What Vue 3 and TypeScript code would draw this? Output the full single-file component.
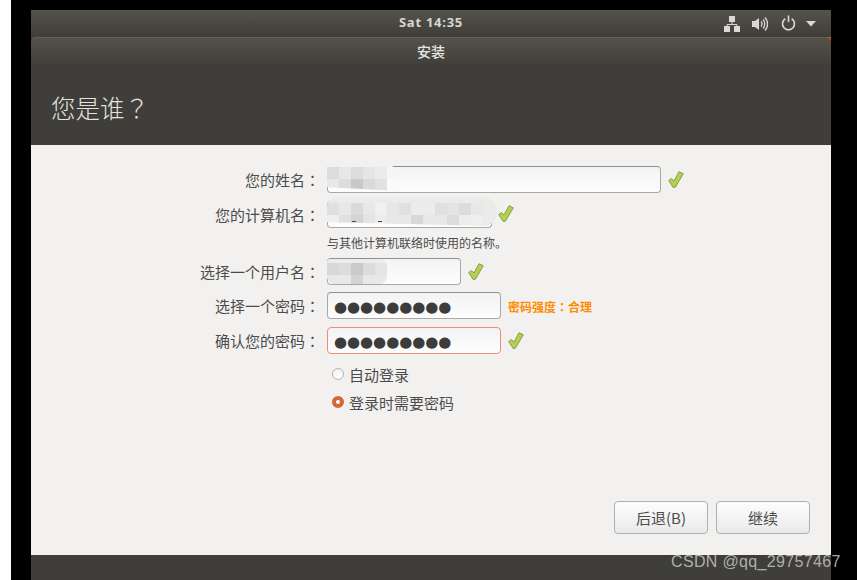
<script setup lang="ts">
const nameCells: string[][] = [
  ['#dcdcdc', '#e6e7e8', '#dcdcdc', '#e4e5e7', '#ebebeb', '#f6f6f6'],
  ['#e8e8e8', '#dcdcdc', '#c8c8c8', '#dadada', '#e2e2e2', '#fafafa']
]
const hostCells: string[][] = [
  ['#e0e0e0', '#e8e8e8', '#dadada', '#e8e8e8', '#f0f0f0', '#e6e6e6', '#e0e0e0', '#ececec', '#ececec', '#e0e0e0', '#e4e4e4', '#dcdcdc', '#e8e8e8', '#ebebe9'],
  ['#eeeeee', '#e0e0e0', '#d4d4d4', '#e4e4e4', '#ececec', '#e8e8e8', '#e8e8e8', '#d8d8d8', '#e8e8e8', '#e8e8e8', '#dcdcdc', '#ececec', '#eeeeee', '#ebebe9']
]
const userCells: string[][] = [
  ['#d8d8d8', '#dcdcdc', '#c8cacc', '#dcdcdc', '#e4e4e4'],
  ['#e8e8e8', '#e8e8e8', '#d4d4d2', '#e8e8e8', '#e8e8e8']
]
const dots = '●●●●●●●●●'
const tick = 'M0.700 9.500 3.500 7.500 6 10 11 0.700 15.300 2.800 7.300 16.300 5 16.300z'
</script>

<template>
  <div class="page">
    <div class="screen">
      <div class="topbar">
        <span class="clock">Sat 14:35</span>
        <div class="tray">
          <svg width="16" height="16" viewBox="0 0 16 16" class="i-net">
            <rect x="5" y="0" width="6" height="6" />
            <rect x="0" y="10" width="6" height="6" />
            <rect x="10" y="10" width="6" height="6" />
            <path d="M8 6v2.500M3 10V8.500h10V10" fill="none" stroke="#d8d8d6" stroke-width="1" />
          </svg>
          <svg width="16" height="16" viewBox="0 0 16 16" class="i-vol">
            <path d="M0 5h3l4-3v12l-4-3H0z" fill="#d8d8d6" />
            <path d="M9 5.500a3.500 3.500 0 0 1 0 5M11 3.500a6.500 6.500 0 0 1 0 9M13 1.500a9.500 9.500 0 0 1 0 13" fill="none" stroke="#d8d8d6" stroke-width="1.300" />
          </svg>
          <svg width="15" height="16" viewBox="0 0 15 16" class="i-pow">
            <path d="M4.300 3.800a6 6 0 1 0 6.400 0" fill="none" stroke="#d8d8d6" stroke-width="1.600" />
            <path d="M7.500 0.500v6.500" fill="none" stroke="#d8d8d6" stroke-width="1.600" />
          </svg>
          <svg width="10" height="6" viewBox="0 0 10 6" class="i-caret"><path d="M0 0h10L5 5.500z" fill="#d8d8d6" /></svg>
        </div>
      </div>

      <div class="window">
        <div class="titlebar">安装</div>
        <div class="header"><h1>您是谁<span class="punct">？</span></h1></div>

        <div class="content">
          <div class="form">
            <div class="row row-name">
              <label>您的姓名<span class="punct">：</span></label>
              <div class="entry entry-name">
                <div class="mosaic mosaic-name">
                  <div v-for="(r, i) in nameCells" :key="i" class="m-row">
                    <span v-for="(c, j) in r" :key="j" class="m-cell" :style="{ background: c }"></span>
                  </div>
                </div>
              </div>
              <svg class="check" width="16" height="17" viewBox="0 0 16 17"><path :d="tick" /></svg>
            </div>

            <div class="row row-host">
              <label>您的计算机名<span class="punct">：</span></label>
              <div class="entry entry-host">
                <div class="mosaic mosaic-host">
                  <div v-for="(r, i) in hostCells" :key="i" class="m-row">
                    <span v-for="(c, j) in r" :key="j" class="m-cell" :style="{ background: c }"></span>
                  </div>
                </div>
                <span class="trace trace-a"></span>
                <span class="trace trace-b"></span>
              </div>
              <svg class="check check-host" width="16" height="17" viewBox="0 0 16 17"><path :d="tick" /></svg>
            </div>

            <div class="hint">与其他计算机联络时使用的名称。</div>

            <div class="row row-user">
              <label>选择一个用户名<span class="punct">：</span></label>
              <div class="entry entry-user">
                <div class="mosaic mosaic-user">
                  <div v-for="(r, i) in userCells" :key="i" class="m-row">
                    <span v-for="(c, j) in r" :key="j" class="m-cell" :style="{ background: c }"></span>
                  </div>
                </div>
              </div>
              <svg class="check" width="16" height="17" viewBox="0 0 16 17"><path :d="tick" /></svg>
            </div>

            <div class="row row-pw">
              <label>选择一个密码<span class="punct">：</span></label>
              <div class="entry entry-pw"><span class="dots">{{ dots }}</span></div>
              <span class="strength">密码强度<span class="punct">：</span>合理</span>
            </div>

            <div class="row row-confirm">
              <label>确认您的密码<span class="punct">：</span></label>
              <div class="entry entry-pw entry-warn"><span class="dots">{{ dots }}</span></div>
              <svg class="check" width="16" height="17" viewBox="0 0 16 17"><path :d="tick" /></svg>
            </div>

            <div class="radios">
              <div class="radio"><span class="knob"></span><span>自动登录</span></div>
              <div class="radio"><span class="knob on"></span><span>登录时需要密码</span></div>
            </div>
          </div>

          <div class="actions">
            <button class="btn" type="button">后退(B)</button>
            <button class="btn" type="button">继续</button>
          </div>
        </div>

        <div class="footer"></div>
      </div>
    </div>
    <span class="watermark">CSDN @qq_29757467</span>
  </div>
</template>

<style>
html, body { margin: 0; padding: 0; background: #fff; overflow: hidden; }
</style>

<style scoped>
.page {
  position: relative;
  width: 846px;
  height: 580px;
  margin-left: 11px;
  padding: 10px 26px 0 20px;
  box-sizing: border-box;
  background: #000;
  font-family: "Noto Sans CJK SC", "Noto Sans", sans-serif;
}
.punct { font-family: "Noto Sans CJK TC", sans-serif; }
.screen { width: 800px; height: 570px; display: flex; flex-direction: column; }

.topbar {
  height: 27px;
  flex: none;
  box-sizing: border-box;
  padding-bottom: 3px;
  position: relative;
  display: flex;
  align-items: center;
  justify-content: center;
  background: linear-gradient(#56534b, #3e3d39);
}
.clock {
  font-family: "Noto Sans", sans-serif;
  font-weight: 700;
  font-size: 13px;
  color: #d6d6d4;
  letter-spacing: 0.75px;
}
.tray {
  position: absolute;
  right: 0;
  top: 0;
  height: 27px;
  width: 107px;
}
.tray svg { position: absolute; }
.i-net { left: 0; top: 6px; fill: #d8d8d6; }
.i-vol { left: 28px; top: 6px; }
.i-pow { left: 57px; top: 5px; }
.i-caret { left: 82px; top: 11px; }

.window {
  flex: 1;
  display: flex;
  flex-direction: column;
  min-height: 0;
  background: linear-gradient(90deg, #8a2230 50%, #d9511c 50%);
}
.titlebar {
  height: 28px;
  flex: none;
  border-radius: 5px 5px 0 0;
  border-top: 1px solid #625f54;
  box-sizing: border-box;
  padding-bottom: 2px;
  background: linear-gradient(#55524a, #3f3e3a);
  color: #e6e5e2;
  font-size: 14px;
  font-weight: 500;
  display: flex;
  align-items: center;
  justify-content: center;
}
.header {
  height: 80px;
  flex: none;
  background: #3f3e3a;
  box-sizing: border-box;
  padding: 6px 0 0 20px;
  display: flex;
  align-items: center;
}
.header h1 {
  margin: 0;
  font-size: 24.500px;
  line-height: 30px;
  font-weight: 300;
  color: #e4e2de;
}

.content {
  flex: 1;
  min-height: 0;
  background: #f2f1ef;
  display: flex;
  flex-direction: column;
  justify-content: space-between;
  padding: 21px 21px 21px 0;
}
.form { display: flex; flex-direction: column; }
.row { display: flex; align-items: center; }
.row label {
  width: 289px;
  flex: none;
  margin-right: 7px;
  text-align: right;
  color: #4c4c4c;
  font-size: 15px;
  line-height: 20px;
}
.entry {
  position: relative;
  box-sizing: border-box;
  height: 27px;
  flex: none;
  border: 1px solid #a8a8a6;
  border-top-color: #8f8f8d;
  border-radius: 4px;
  background: linear-gradient(#f3f3f3, #fdfdfd);
  display: flex;
  align-items: center;
}
.entry-name { width: 334px; }
.entry-host { width: 165px; }
.entry-user { width: 134px; }
.entry-pw { width: 174px; }
.entry-warn { border-color: #ea9070; }
.row-host { margin-top: 8px; }
.row-user { margin-top: 7px; }
.row-pw { margin-top: 7px; }
.row-confirm { margin-top: 8px; }
.check {
  flex: none;
  margin-left: 7px;
  fill: #b3cf57;
  stroke: #84a23a;
  stroke-width: 1;
  stroke-linejoin: round;
}
.check-host { margin-left: 6px; position: relative; top: -1px; }
.hint {
  margin-left: 296px;
  margin-top: 7px;
  font-size: 12px;
  line-height: 16px;
  color: #4c4c4c;
  height: 16px;
}
.dots {
  font-family: "DejaVu Sans", sans-serif;
  font-size: 15px;
  line-height: 1;
  color: #3c3c3c;
  padding: 4px 0 0 6px;
  letter-spacing: -0.05px;
}
.strength {
  margin-left: 7px;
  color: #ff8c00;
  font-size: 12px;
  font-weight: 700;
  padding-top: 1px;
}
.mosaic {
  position: absolute;
  left: -1px;
  display: flex;
  flex-direction: column;
  overflow: hidden;
  box-sizing: border-box;
}
.mosaic-name {
  top: -5px;
  height: 29px;
  padding-top: 5px;
  background: #f2f1ef;
  border-radius: 4px 18px 0 0;
  clip-path: polygon(0 0, 100% 0, 100% 100%, 0 86%);
}
.mosaic-host {
  top: -5px;
  width: 170px;
  height: 29px;
  padding-top: 6px;
  background: #ebebe9;
  border-radius: 10px 14px 14px 0;
  clip-path: polygon(0 0, 100% 0, 100% 100%, 0 86%);
}
.mosaic-user {
  top: 0;
  height: 25px;
  padding-top: 4px;
  background: #ececec;
  border-radius: 4px 8px 8px 8px;
}
.m-row { display: flex; flex: none; }
.m-cell { width: 12px; height: 12px; display: block; flex: none; }
.trace { position: absolute; top: 19px; height: 1px; width: 4px; }
.trace-a { left: 24px; background: #3b4a78; }
.trace-b { left: 50px; background: #5a3a3a; }

.radios {
  margin-left: 301px;
  margin-top: 10px;
  display: flex;
  flex-direction: column;
  gap: 8px;
}
.radio {
  display: flex;
  align-items: center;
  gap: 5px;
  height: 20px;
  font-size: 15px;
  color: #4c4c4c;
}
.knob {
  width: 12px;
  height: 12px;
  box-sizing: border-box;
  border-radius: 50%;
  border: 1px solid #b4b4b2;
  background: linear-gradient(#f0f0f0, #fff);
  flex: none;
}
.knob.on {
  background: #fff;
  border: 4px solid #d4663a;
}

.actions { display: flex; justify-content: flex-end; gap: 8px; }
.btn {
  width: 94px;
  height: 33px;
  box-sizing: border-box;
  border: 1px solid #b0b0ae;
  border-radius: 4px;
  background: linear-gradient(#fdfdfd, #eaeaea);
  color: #4c4c4c;
  font-family: inherit;
  font-size: 15px;
  padding: 0;
}

.footer { height: 25px; flex: none; background: #3f3e3a; }

.watermark {
  position: absolute;
  left: 660px;
  top: 552px;
  font-family: "Liberation Sans", sans-serif;
  font-size: 16px;
  line-height: 20px;
  letter-spacing: 0.35px;
  color: rgba(190, 190, 190, 0.9);
  white-space: nowrap;
}
</style>
